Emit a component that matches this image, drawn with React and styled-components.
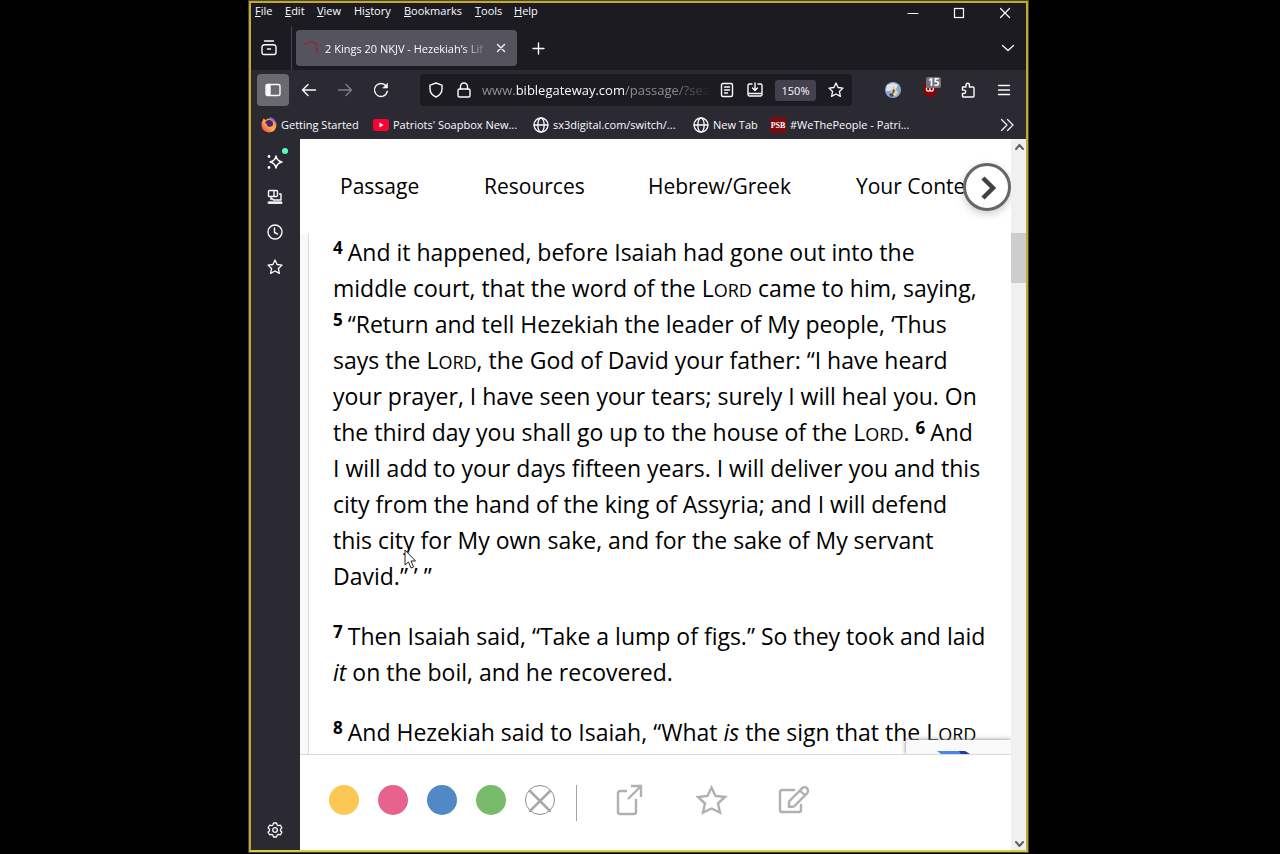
import React from 'react';
import styled, { createGlobalStyle } from 'styled-components';

const GlobalStyle = createGlobalStyle`
  *, *::before, *::after { box-sizing: border-box; }
  body { margin: 0; background: #000; font-family: "Open Sans", "Noto Sans", sans-serif; }
  button { font: inherit; color: inherit; background: none; border: 0; padding: 0; }
  a { color: inherit; text-decoration: none; }
  svg { display: block; flex: none; }
`;

const Desktop = styled.div`
  height: 100vh;
  min-height: 480px;
  padding: 1px 252px 2px 249px;
  display: flex;
`;

const BrowserWindow = styled.div`
  flex: 1;
  min-width: 0;
  display: flex;
  flex-direction: column;
  border: 2px solid #c3a92f;
  border-bottom-color: #ddcc3c;
  outline: 1px solid #4a4434;
  background: #1c1b22;
  color: #fbfbfe;
  font-size: 11px;
`;

const MenuBar = styled.header`
  height: 20px;
  display: flex;
  justify-content: space-between;
  padding-left: 4px;
`;

const Menus = styled.nav`
  display: flex;
  align-items: flex-start;
`;

const MenuItem = styled.button`
  width: ${(p) => p.$w}px;
  text-align: left;
  line-height: 16px;
  white-space: nowrap;
`;

const WindowButtons = styled.div`
  display: flex;
  align-items: center;
  gap: 30px;
  padding-right: 13px;
`;

const IconButton = styled.button`
  width: ${(p) => p.$w || 16}px;
  height: ${(p) => p.$h || 16}px;
  display: flex;
  align-items: center;
  justify-content: center;
  flex: none;
  border-radius: 4px;
  background: ${(p) => p.$bg || 'transparent'};
  opacity: ${(p) => (p.$dim ? 0.4 : 1)};
`;

const TabStrip = styled.div`
  height: 47px;
  padding-top: 3px;
  display: flex;
  align-items: center;
`;

const TabManager = styled.div`
  align-self: stretch;
  width: 41px;
  padding-left: 10px;
  display: flex;
  align-items: center;
  border-right: 1px solid #46454d;
`;

const Tab = styled.div`
  width: 221px;
  height: 36px;
  margin: 0 13px 0 4px;
  padding: 0 8px 0 6px;
  display: flex;
  align-items: center;
  gap: 4px;
  border-radius: 4px;
  background: #54535e;
`;

const TabTitle = styled.span`
  flex: 1;
  overflow: hidden;
  white-space: nowrap;
  margin-left: 1px;
  mask-image: linear-gradient(to left, transparent, #000 26px);
`;

const Spacer = styled.div`
  flex: 1;
`;

const NavBar = styled.div`
  height: 40px;
  display: flex;
  align-items: center;
  padding: 0 14px 0 6px;
  background: #2b2a33;
`;

const NavButtons = styled.div`
  display: flex;
  align-items: center;
  gap: 20px;
  margin-left: 12px;
`;

const UrlBar = styled.div`
  flex: 1;
  min-width: 0;
  height: 32px;
  margin: 0 33px 0 31px;
  padding: 0 8px;
  display: flex;
  align-items: center;
  gap: 12px;
  border-radius: 4px;
  background: #1c1b22;
`;

const Address = styled.a`
  flex: 1;
  min-width: 0;
  overflow: hidden;
  white-space: nowrap;
  font-size: 13px;
  line-height: 20px;
  color: #8f8f96;
  margin: 0 -4px 0 -2px;
  mask-image: linear-gradient(to left, transparent, #000 40px);
  b { font-weight: 400; color: #fbfbfe; }
`;

const Zoom = styled.button`
  width: 41px;
  height: 21px;
  flex: none;
  border-radius: 3px;
  background: #42414d;
`;

const Extensions = styled.div`
  display: flex;
  align-items: center;
  gap: 21px;
`;

const BadgeHost = styled.div`
  position: relative;
`;

const Badge = styled.span`
  position: absolute;
  left: 4px;
  top: -5px;
  padding: 0 2px;
  border-radius: 2px;
  background: #72727a;
  font-size: 10px;
  font-weight: 700;
  line-height: 11px;
`;

const BookmarksBar = styled.nav`
  height: 29px;
  display: flex;
  align-items: center;
  padding: 0 11px 0 10px;
  background: #2b2a33;
`;

const Bookmark = styled.a`
  width: ${(p) => p.$w}px;
  display: flex;
  align-items: center;
  gap: 4px;
  white-space: nowrap;
`;

const Body = styled.div`
  flex: 1;
  min-height: 0;
  display: flex;
`;

const SideRail = styled.aside`
  width: 49px;
  display: flex;
  flex-direction: column;
  align-items: center;
  gap: 19px;
  padding: 15px 1px 12px 0;
  background: #2b2a33;
`;

const Dot = styled.span`
  position: absolute;
  right: -5px;
  top: -6px;
  width: 6px;
  height: 6px;
  border-radius: 50%;
  background: #54ffbd;
`;

const Page = styled.div`
  flex: 1;
  min-width: 0;
  display: flex;
  flex-direction: column;
  background: #fff;
  color: #000;
`;

const Topics = styled.nav`
  position: relative;
  display: flex;
  height: 95px;
  padding: 31px 0 0 40px;
  overflow: hidden;
  font-size: 21px;
  line-height: 32px;
  white-space: nowrap;
`;

const Topic = styled.a`
  flex: none;
  width: ${(p) => p.$w}px;
`;

const NextButton = styled.button`
  position: absolute;
  right: 0;
  top: 24px;
  width: 48px;
  height: 48px;
  display: flex;
  align-items: center;
  justify-content: center;
  border: 3px solid #66666a;
  border-radius: 50%;
  background: #fff;
  box-shadow: 0 3px 8px rgba(0, 0, 0, 0.2);
`;

const Reader = styled.main`
  position: relative;
  flex: 1;
  min-height: 0;
  overflow: hidden;
  padding-left: 8px;
  background: #f8f8f9;
`;

const Passage = styled.article`
  min-height: 100%;
  padding-left: 24px;
  border-left: 1px solid #dcdcde;
  background: #fff;
  font-size: 23px;
  line-height: 36px;
  white-space: nowrap;
  p { margin: 0 0 24px; }
`;

const VerseNumber = styled.sup`
  margin-right: 5px;
  font-size: 17px;
  font-weight: 700;
  line-height: 0;
  vertical-align: 7px;
`;

const SmallCaps = styled.span`
  font-variant: small-caps;
  span { font-size: 26px; line-height: 0; }
`;

const Pointer = styled.svg`
  position: absolute;
  left: 104px;
  top: 315px;
`;

const Captcha = styled.div`
  position: absolute;
  right: 0;
  bottom: 0;
  width: 105px;
  height: 14px;
  padding: 11px 0 0 31px;
  background: #f9f9f9;
  box-shadow: 0 0 5px #808080;
`;

const ActionBar = styled.footer`
  height: 96px;
  display: flex;
  align-items: center;
  padding: 0 0 5px 29px;
  border-top: 1px solid #d8d8da;
`;

const Swatches = styled.div`
  display: flex;
  gap: 19px;
`;

const Swatch = styled.button`
  width: 30px;
  height: 30px;
  border-radius: 50%;
  background: ${(p) => p.$color};
`;

const Divider = styled.span`
  width: 1px;
  height: 36px;
  margin: 6px 37px 0 21px;
  background: #a2a2a4;
`;

const Actions = styled.div`
  display: flex;
  gap: 50px;
  color: #b0b0b2;
`;

const Scrollbar = styled.div`
  width: 15px;
  display: flex;
  flex-direction: column;
  align-items: center;
  background: #f0f0f0;
`;

const Track = styled.div`
  flex: 1;
  align-self: stretch;
  padding-top: 78px;
`;

const Thumb = styled.div`
  height: 50px;
  background: #cdcdcd;
`;

const Icon = ({ size = 16, box, children, sw = 1.4, ...rest }) => (
  <svg width={size} height={size} viewBox={box || '0 0 16 16'} fill="none" stroke="currentColor"
    strokeWidth={sw} strokeLinecap="round" strokeLinejoin="round" aria-hidden="true" {...rest}>
    {children}
  </svg>
);

const Star = () => (
  <Icon sw={1.3}><path d="M8 1l2.100 4.500 4.900.6-3.600 3.400 1 4.900L8 12l-4.400 2.400 1-4.900L1 6.100l4.900-.6z" /></Icon>
);
const Globe = () => (
  <Icon sw={1.3}><circle cx="8" cy="8" r="7" /><ellipse cx="8" cy="8" rx="3.2" ry="7" /><path d="M1 8h14" /></Icon>
);
const Firefox = () => (
  <svg width="16" height="16" viewBox="0 0 16 16" aria-hidden="true">
    <defs>
      <linearGradient id="flame" x1="1" y1="0" x2="0" y2="1">
        <stop offset="0" stopColor="#ff7a33" /><stop offset=".5" stopColor="#ffb04a" /><stop offset="1" stopColor="#f0304e" />
      </linearGradient>
    </defs>
    <path d="M1.500 4l1-2.500L4.500 3C6 1.500 9 .8 11 2c4 2 5 5 4 8.500A7.500 7.500 0 0 1 .5 8.500C.4 6.500.8 5 1.500 4z" fill="url(#flame)" />
    <path d="M8.500.3c4 .2 7.500 4 7 8.700-.3-2-1-3.500-2.500-4.500C11 3.500 9.500 2.500 8.500.3z" fill="#9059ff" />
    <path d="M5.500 3.800c3-2 7-.3 6.500 3.700-.5 2.500-4 3-5.500 1.500-.8-1 .3-2-2-2.500-.5-1 0-2 1-2.700z" fill="#45276b" />
  </svg>
);
const YouTube = () => (
  <svg width="16" height="16" viewBox="0 0 16 16" aria-hidden="true">
    <rect x="0" y="2" width="16" height="12" rx="3" fill="#ff0033" /><path d="M6.500 5.500v5l4-2.500z" fill="#fff" />
  </svg>
);
const Psb = () => (
  <svg width="16" height="16" viewBox="0 0 16 16" aria-hidden="true">
    <rect width="16" height="16" fill="#7d0a10" />
    <text x="8" y="11" textAnchor="middle" fontFamily="Liberation Serif, serif" fontWeight="700" fontSize="8" fill="#fff">PSB</text>
  </svg>
);

const Lord = () => <SmallCaps>L<span>ord</span></SmallCaps>;

const menus = [
  ['', 'F', 'ile', 30], ['', 'E', 'dit', 32], ['', 'V', 'iew', 37], ['Hi', 's', 'tory', 50],
  ['', 'B', 'ookmarks', 71], ['', 'T', 'ools', 39], ['', 'H', 'elp', 30],
];

const bookmarks = [
  ['Getting Started', Firefox, 112],
  ["Patriots' Soapbox New...", YouTube, 160],
  ['sx3digital.com/switch/...', Globe, 160],
  ['New Tab', Globe, 77],
  ['#WeThePeople - Patri...', Psb, 150],
];

const topics = [['Passage', 144], ['Resources', 164], ['Hebrew/Greek', 208], ['Your Content', 150]];

const swatches = [['Yellow', '#fcc755'], ['Pink', '#e8638c'], ['Blue', '#5089c6'], ['Green', '#77bb6b']];

export default function App() {
  return (
    <>
      <GlobalStyle />
      <Desktop>
        <BrowserWindow>
          <MenuBar>
            <Menus aria-label="Menu bar">
              {menus.map(([a, key, b, w]) => <MenuItem key={key + b} $w={w}>{a}<u>{key}</u>{b}</MenuItem>)}
            </Menus>
            <WindowButtons>
              <IconButton aria-label="Minimize"><Icon sw={1}><path d="M3 8.500h10" /></Icon></IconButton>
              <IconButton aria-label="Maximize"><Icon sw={1.2}><rect x="3.500" y="3.500" width="9" height="9" strokeLinejoin="miter" /></Icon></IconButton>
              <IconButton aria-label="Close"><Icon sw={1.2}><path d="M3.500 3.500l9 9M12.500 3.500l-9 9" /></Icon></IconButton>
            </WindowButtons>
          </MenuBar>

          <TabStrip>
            <TabManager>
              <IconButton aria-label="Recent browsing">
                <Icon><path d="M3.500 1h9M1 7.500a2.500 2.500 0 0 1 2.500-2.800h9A2.500 2.500 0 0 1 15 7.500V12.500a2 2 0 0 1-2 2H3a2 2 0 0 1-2-2zM6.500 9h3" /></Icon>
              </IconButton>
            </TabManager>
            <Tab>
              <Icon size={18} box="0 0 18 18" sw={2}><path d="M3 5.500Q8 1 13 4Q16 7 14.500 14" stroke="#80343c" /></Icon>
              <TabTitle>2 Kings 20 NKJV - Hezekiah’s Lif</TabTitle>
              <IconButton aria-label="Close tab"><Icon sw={1.3}><path d="M4.500 4.500l7 7M11.500 4.500l-7 7" /></Icon></IconButton>
            </Tab>
            <IconButton aria-label="New tab"><Icon><path d="M8.500 3v11M3 8.500h11" /></Icon></IconButton>
            <Spacer />
            <IconButton aria-label="List all tabs" $w={36}><Icon sw={1.3}><path d="M2.500 5.500L8 10.500l5.500-5" /></Icon></IconButton>
          </TabStrip>

          <NavBar>
            <IconButton aria-label="Sidebar" $w={32} $h={32} $bg="#6a6970">
              <Icon><rect x="1" y="2.500" width="14" height="11" rx="1.500" /><path d="M2 3h3v10H2z" fill="currentColor" /></Icon>
            </IconButton>
            <NavButtons>
              <IconButton aria-label="Back"><Icon><path d="M14.500 8h-13M7 2.500L1.500 8 7 13.500" /></Icon></IconButton>
              <IconButton aria-label="Forward" $dim><Icon><path d="M1.500 8h13M9 2.500L14.500 8 9 13.500" /></Icon></IconButton>
              <IconButton aria-label="Reload"><Icon><path d="M14.300 9.500A6.500 6.500 0 1 1 13 3.800" /><path d="M14.500 1.500v4.500H10z" fill="currentColor" strokeWidth=".6" /></Icon></IconButton>
            </NavButtons>
            <UrlBar>
              <Icon><path d="M8 1l6 2.200V7c0 4-2.200 6.300-6 8-3.800-1.700-6-4-6-8V3.200z" /></Icon>
              <Icon><rect x="2" y="7" width="12" height="8" rx="1.500" /><path d="M4.500 7V4.500a3.500 3.500 0 0 1 7 0V7" /></Icon>
              <Address href="#url">www.<b>biblegateway.com</b>/passage/?sea</Address>
              <IconButton aria-label="Reader view"><Icon><rect x="2.500" y="1.500" width="11" height="13" rx="1.500" /><path d="M5.500 5h5M5.500 8h5M5.500 11h3" /></Icon></IconButton>
              <IconButton aria-label="Install"><Icon><path d="M5 2H2.500A1.500 1.500 0 0 0 1 3.500v9A1.500 1.500 0 0 0 2.500 14h11a1.500 1.500 0 0 0 1.500-1.500v-9A1.500 1.500 0 0 0 13.500 2H11M8 1v7M5.500 6L8 8.500 10.500 6M1 11.500h14" /></Icon></IconButton>
              <Zoom>150%</Zoom>
              <IconButton aria-label="Bookmark"><Star /></IconButton>
            </UrlBar>
            <Extensions>
              <IconButton aria-label="Dog extension">
                <svg width="16" height="16" viewBox="0 0 16 16" aria-hidden="true">
                  <circle cx="8" cy="8" r="8" fill="#8fa9c8" /><path d="M2 3l6-2 5 2-2 4-6 2-4 0z" fill="#dbe5ec" />
                  <path d="M5 13l2-6 2-4 2 5 2 2-2 4z" fill="#e9d2ae" /><path d="M8 7l2 1-1 3-2 1z" fill="#70472d" /><path d="M4 12l3-1 2 3-3 1z" fill="#35507d" />
                </svg>
              </IconButton>
              <BadgeHost>
                <IconButton aria-label="Content blocker">
                  <Icon><path d="M8 0l6.500 2.500V7c0 5-2.500 7-6.500 8.500C4 14 1.500 12 1.500 7V2.500z" fill="#8b0006" stroke="none" /><path d="M4.500 6v1.500a1.700 1.700 0 0 0 3.400 0V6.500M7.900 7.500a1.700 1.700 0 1 0 3.400 0V6" strokeWidth="1.300" /></Icon>
                </IconButton>
                <Badge>15</Badge>
              </BadgeHost>
              <IconButton aria-label="Extensions">
                <Icon><path d="M3.500 5H7V3a1.700 1.700 0 0 1 3.400 0v2H14a1 1 0 0 1 1 1v8a1 1 0 0 1-1 1H4.500a1 1 0 0 1-1-1v-2.500H5a1.700 1.700 0 0 0 0-3.400H3.500z" /></Icon>
              </IconButton>
              <IconButton aria-label="Application menu"><Icon><path d="M2.500 3.500h11M2.500 8h11M2.500 12.500h11" /></Icon></IconButton>
            </Extensions>
          </NavBar>

          <BookmarksBar aria-label="Bookmarks">
            {bookmarks.map(([label, Glyph, w]) => <Bookmark key={label} href="#bookmark" $w={w}><Glyph />{label}</Bookmark>)}
            <Spacer />
            <IconButton aria-label="More bookmarks"><Icon sw={1.2}><path d="M2.500 2.500L8 8l-5.500 5.500M8.500 2.500L14 8l-5.500 5.500" /></Icon></IconButton>
          </BookmarksBar>

          <Body>
            <SideRail>
              <BadgeHost>
                <IconButton aria-label="AI chatbot"><Icon><path d="M9 2q1 5 6 6-5 1-6 6-1-5-6-6 5-1 6-6z" /><circle cx="2" cy="2.500" r=".7" fill="currentColor" /><circle cx="2" cy="13.500" r=".7" fill="currentColor" /></Icon></IconButton>
                <Dot />
              </BadgeHost>
              <IconButton aria-label="Synced tabs"><Icon><rect x="1.500" y="1.500" width="9" height="6" rx="1" /><path d="M7 2v5M4 8v2.500M12.500 5h1.500v6H6.500L5 9.500" /><path d="M1.500 12.800h13.500v1.700H1.500z" fill="currentColor" strokeWidth=".8" /></Icon></IconButton>
              <IconButton aria-label="History"><Icon><circle cx="8" cy="8" r="7" /><path d="M7.500 4v4.500l3 1.500" /></Icon></IconButton>
              <IconButton aria-label="Bookmarks"><Star /></IconButton>
              <Spacer />
              <IconButton aria-label="Settings">
                <Icon sw={1.3}><circle cx="8" cy="8" r="2.300" /><path d="M6.500 1h3l.6 2 1.200.7 2.100-.5 1.500 2.600L13.500 7.300v1.400l1.400 1.500-1.500 2.600-2.100-.5-1.200.7-.6 2h-3l-.6-2-1.200-.7-2.100.5-1.500-2.600 1.400-1.500V7.300L1.100 5.800l1.500-2.600 2.100.5L5.900 3z" /></Icon>
              </IconButton>
            </SideRail>

            <Page>
              <Topics>
                {topics.map(([label, w]) => <Topic key={label} href="#topic" $w={w}>{label}</Topic>)}
                <NextButton aria-label="Next"><Icon size={28} box="0 0 28 28" sw={4.5}><path d="M10 5l10 10-10 10" stroke="#414144" strokeLinecap="butt" strokeLinejoin="miter" /></Icon></NextButton>
              </Topics>
              <Reader>
                <Passage>
                  <p>
                    <VerseNumber>4</VerseNumber>And it happened, before Isaiah had gone out into the<br />
                    middle court, that the word of the <Lord /> came to him, saying,<br />
                    <VerseNumber>5</VerseNumber>“Return and tell Hezekiah the leader of My people, ‘Thus<br />
                    says the <Lord />, the God of David your father: “I have heard<br />
                    your prayer, I have seen your tears; surely I will heal you. On<br />
                    the third day you shall go up to the house of the <Lord />. <VerseNumber>6</VerseNumber>And<br />
                    I will add to your days fifteen years. I will deliver you and this<br />
                    city from the hand of the king of Assyria; and I will defend<br />
                    this city for My own sake, and for the sake of My servant<br />
                    David.” ’ ”
                  </p>
                  <p>
                    <VerseNumber>7</VerseNumber>Then Isaiah said, “Take a lump of figs.” So they took and laid<br />
                    <i>it</i> on the boil, and he recovered.
                  </p>
                  <p><VerseNumber>8</VerseNumber>And Hezekiah said to Isaiah, “What <i>is</i> the sign that the <Lord /></p>
                </Passage>
                <Pointer width="13" height="21" viewBox="0 0 13 21" aria-hidden="true">
                  <path d="M1 1v15l3.500-3 2.500 6 2.500-1-2.500-6h4.500z" fill="#fff" stroke="#222" />
                </Pointer>
                <Captcha>
                  <svg width="34" height="3" viewBox="0 0 34 3" aria-hidden="true"><path d="M0 0h23l4 3H4z" fill="#4a86e8" /><path d="M22 0l6 0 5 3H24z" fill="#1c3aa9" /></svg>
                </Captcha>
              </Reader>
              <ActionBar>
                <Swatches>
                  {swatches.map(([name, color]) => <Swatch key={name} aria-label={name} $color={color} />)}
                  <Swatch aria-label="Clear highlight">
                    <Icon size={30} box="0 0 30 30" sw={1}><circle cx="15" cy="15" r="14.500" stroke="#909092" /><path d="M5 6l20 20M25 6L5 26" stroke="#a9a9ab" strokeWidth="2.500" /></Icon>
                  </Swatch>
                </Swatches>
                <Divider />
                <Actions>
                  <IconButton aria-label="Share" $w={32} $h={32}><Icon size={32} box="0 0 32 32" sw={2.4}><path d="M13 7H6a2 2 0 0 0-2 2v19a2 2 0 0 0 2 2h14a2 2 0 0 0 2-2V15M14 15L26 3M17 2h10v11" strokeLinecap="butt" strokeLinejoin="miter" /></Icon></IconButton>
                  <IconButton aria-label="Favorite" $w={32} $h={32}><Icon size={32} box="0 0 32 32" sw={2.4}><path strokeLinejoin="miter" d="M15.500 3.500l4 8.500 9.500 1-7 6.500 2 9-8.500-4-8.500 4 2-9-7-6.500 9.500-1z" /></Icon></IconButton>
                  <IconButton aria-label="Note" $w={32} $h={32}><Icon size={32} box="0 0 32 32" sw={2.4}><path d="M16 6H4a2 2 0 0 0-2 2v18a2 2 0 0 0 2 2h17a2 2 0 0 0 2-2v-5M11 23v-5.500L24 4.300a3.500 3.500 0 0 1 5 5L16 22.500zM22 6.500l5 5" /></Icon></IconButton>
                </Actions>
              </ActionBar>
            </Page>
            <Scrollbar>
              <IconButton aria-label="Scroll up"><Icon sw={2}><path d="M5 10l3.500-4 3.500 4" stroke="#606060" /></Icon></IconButton>
              <Track><Thumb /></Track>
              <IconButton aria-label="Scroll down"><Icon sw={2}><path d="M5 8l3.500 4L12 8" stroke="#606060" /></Icon></IconButton>
            </Scrollbar>
          </Body>
        </BrowserWindow>
      </Desktop>
    </>
  );
}
